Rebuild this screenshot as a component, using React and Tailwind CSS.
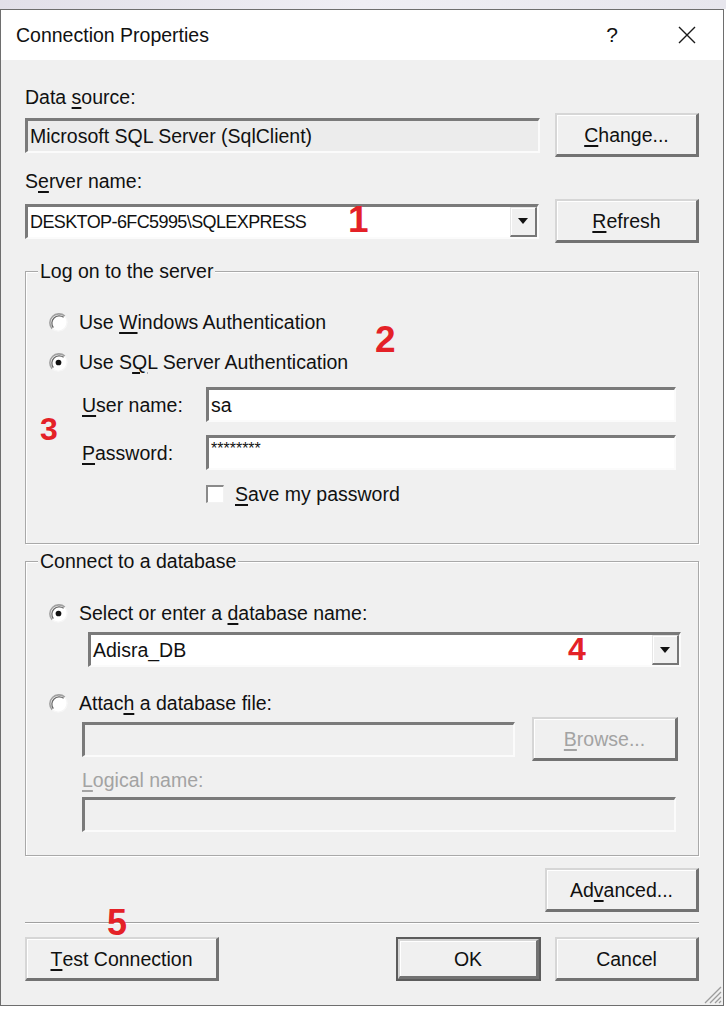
import React from "react";

function U({ children }) {
  return <span className="underline decoration-[1.5px] underline-offset-[3px]">{children}</span>;
}

function Sunken({ className = "", children }) {
  return (
    <div
      className={`border-t-[3px] border-l-[3px] border-b-2 border-r-2 border-t-[#7a7a7a] border-l-[#7a7a7a] border-b-[#fbfbfb] border-r-[#fbfbfb] ${className}`}
    >
      {children}
    </div>
  );
}

function Btn({ className = "", children }) {
  return (
    <div
      className={`flex items-center justify-center bg-[#f0f0f0] border-t-2 border-l-2 border-b-[3px] border-r-[3px] border-t-[#d6d6d6] border-l-[#d6d6d6] border-b-[#727272] border-r-[#727272] shadow-[inset_1px_1px_0_#ffffff] ${className}`}
    >
      {children}
    </div>
  );
}

function Radio({ checked }) {
  return (
    <svg width="19" height="19" viewBox="0 0 18 18" className="shrink-0">
      <circle cx="9" cy="9" r="8.3" fill="#ffffff" />
      <path d="M15 3 A8.5 8.5 0 0 0 3 15" stroke="#a0a0a0" strokeWidth="1.5" fill="none" />
      <path d="M13.9 4.1 A7 7 0 0 0 4.1 13.9" stroke="#6a6a6a" strokeWidth="1.2" fill="none" />
      <path d="M15 3 A8.5 8.5 0 0 1 3 15" stroke="#f6f6f6" strokeWidth="1.2" fill="none" />
      {checked && <circle cx="9" cy="9" r="2.7" fill="#111111" />}
    </svg>
  );
}

function Check() {
  return (
    <div className="w-[18px] h-[18px] bg-white shrink-0 border-t-2 border-l-2 border-t-[#8a8a8a] border-l-[#8a8a8a] border-b border-r border-b-[#f2f2f2] border-r-[#f2f2f2]" />
  );
}

function DropBtn() {
  return (
    <div className="w-[27px] h-full bg-[#f0f0f0] border-t border-l border-t-[#e6e6e6] border-l-[#e6e6e6] border-b-2 border-r-2 border-b-[#777777] border-r-[#777777] shadow-[inset_1px_1px_0_#ffffff] flex items-center justify-center shrink-0">
      <svg width="10" height="6" viewBox="0 0 10 6">
        <path d="M0 0 L10 0 L5 6 Z" fill="#111111" />
      </svg>
    </div>
  );
}

export default function App() {
  return (
    <div className="w-[726px] h-[1024px] bg-white font-['Liberation_Sans',Arial,sans-serif] text-[19.5px] leading-[24px] text-[#111111] overflow-hidden">
      <div className="h-[9px] bg-gradient-to-r from-[#e2e0e9] via-[#efeef4] to-[#e7e6ed]" />
      <div className="relative w-[724px] h-[997px] border border-[#6e6e6e] bg-[#f0f0f0] flex flex-col">
        {/* Title bar */}
        <div className="h-[50px] shrink-0 bg-white flex items-center pl-[15px] pr-[27px]">
          <span className="flex-1">Connection Properties</span>
          <span className="w-[20px] text-center text-[21px]">?</span>
          <svg width="18" height="18" viewBox="0 0 18 18" className="ml-[56px]">
            <path d="M1 1 L17 17 M17 1 L1 17" stroke="#1a1a1a" strokeWidth="1.4" />
          </svg>
        </div>

        {/* Body */}
        <div className="px-[24px] pt-[25px]">
          <div className="h-[24px]">
            Data <U>s</U>ource:
          </div>
          <div className="mt-[4px] h-[44px] flex items-center justify-between">
            <Sunken className="w-[515px] h-[35px] bg-[#ececec] flex items-center pl-[2px]">
              Microsoft SQL Server (SqlClient)
            </Sunken>
            <Btn className="w-[144px] h-[44px]">
              <U>C</U>hange...
            </Btn>
          </div>

          <div className="mt-[12px] h-[24px]">
            S<U>e</U>rver name:
          </div>
          <div className="mt-[6px] h-[44px] flex items-center justify-between">
            <Sunken className="relative w-[514px] h-[35px] bg-white flex items-center">
              <span className="flex-1 pl-[2px] text-[18px] tracking-[-0.6px]">{"DESKTOP-6FC5995\\SQLEXPRESS"}</span>
              <DropBtn />
              <span className="absolute left-[320px] top-[-6px] text-[37px] leading-none font-bold text-[#e42127]">1</span>
            </Sunken>
            <Btn className="w-[144px] h-[44px]">
              <U>R</U>efresh
            </Btn>
          </div>

          {/* Group 1 */}
          <div className="relative mt-[28px] h-[273px] border border-[#a9a9a9] shadow-[inset_1px_1px_0_#ffffff,1px_1px_0_#ffffff] pt-[38px]">
            <span className="absolute left-[12px] top-[-13px] px-[2px] bg-[#f0f0f0]">Log on to the server</span>
            <div className="h-[24px] flex items-center pl-[23px]">
              <Radio />
              <span className="ml-[11px]">
                Use <U>W</U>indows Authentication
              </span>
            </div>
            <div className="mt-[16px] h-[24px] flex items-center pl-[23px]">
              <Radio checked />
              <span className="ml-[11px]">
                Use S<U>Q</U>L Server Authentication
              </span>
            </div>
            <div className="mt-[13px] h-[35px] flex items-center pl-[56px] pr-[22px]">
              <span className="w-[124px] shrink-0">
                <U>U</U>ser name:
              </span>
              <Sunken className="flex-1 h-[35px] bg-white flex items-center pl-[2px]">sa</Sunken>
            </div>
            <div className="mt-[13px] h-[35px] flex items-center pl-[56px] pr-[22px]">
              <span className="w-[124px] shrink-0">
                <U>P</U>assword:
              </span>
              <Sunken className="flex-1 h-[35px] bg-white flex items-start pl-[2px] pt-[1px] text-[16px] leading-[20px]">
                ********
              </Sunken>
            </div>
            <div className="mt-[12px] h-[24px] flex items-center pl-[180px]">
              <Check />
              <span className="ml-[11px]">
                <U>S</U>ave my password
              </span>
            </div>
            <span className="absolute left-[349px] top-[49px] text-[37px] leading-none font-bold text-[#e42127]">2</span>
            <span className="absolute left-[14px] top-[141px] text-[32px] leading-none font-bold text-[#e42127]">3</span>
          </div>

          {/* Group 2 */}
          <div className="relative mt-[17px] h-[295px] border border-[#a9a9a9] shadow-[inset_1px_1px_0_#ffffff,1px_1px_0_#ffffff] pt-[39px]">
            <span className="absolute left-[12px] top-[-13px] px-[2px] bg-[#f0f0f0]">Connect to a database</span>
            <div className="h-[24px] flex items-center pl-[23px]">
              <Radio checked />
              <span className="ml-[11px]">
                Select or enter a <U>d</U>atabase name:
              </span>
            </div>
            <div className="mt-[7px] ml-[62px] mr-[17px]">
              <Sunken className="relative h-[35px] bg-white flex items-center">
                <span className="flex-1 pl-[2px]">Adisra_DB</span>
                <DropBtn />
                <span className="absolute left-[477px] top-[-2px] text-[32px] leading-none font-bold text-[#e42127]">4</span>
              </Sunken>
            </div>
            <div className="mt-[24px] h-[24px] flex items-center pl-[23px]">
              <Radio />
              <span className="ml-[11px]">
                Attac<U>h</U> a database file:
              </span>
            </div>
            <div className="mt-[2px] h-[44px] flex items-center justify-between pl-[56px] pr-[20px]">
              <Sunken className="w-[433px] h-[35px] bg-[#f0f0f0]" />
              <Btn className="w-[146px] h-[44px] text-[#a3a3a3]">
                <U>B</U>rowse...
              </Btn>
            </div>
            <div className="mt-[7px] h-[24px] pl-[56px] text-[#a3a3a3]">
              <U>L</U>ogical name:
            </div>
            <div className="mt-[5px] ml-[56px] mr-[22px]">
              <Sunken className="h-[35px] bg-[#f0f0f0]" />
            </div>
          </div>

          {/* Advanced */}
          <div className="mt-[12px] flex justify-end">
            <Btn className="w-[154px] h-[44px]">
              Ad<U>v</U>anced...
            </Btn>
          </div>

          {/* Separator + bottom buttons */}
          <div className="relative">
            <div className="mt-[10px] h-[2px] border-t border-t-[#a0a0a0] border-b border-b-[#ffffff]" />
            <div className="mt-[13px] h-[44px] flex items-center">
              <Btn className="w-[194px] h-[44px]">
                <U>T</U>est Connection
              </Btn>
              <div className="flex-1" />
              <div className="w-[145px] h-[44px] border-2 border-[#5c5c5c] flex">
                <Btn className="flex-1 h-full">OK</Btn>
              </div>
              <Btn className="ml-[14px] w-[144px] h-[44px]">Cancel</Btn>
            </div>
            <span className="absolute left-[82px] top-[-17px] text-[36px] leading-none font-bold text-[#e42127]">5</span>
          </div>
        </div>

        {/* Resize grip */}
        <svg width="22" height="22" viewBox="0 0 22 22" className="absolute right-[1px] bottom-[1px]">
          <path d="M21 5 L5 21 M21 10 L10 21 M21 15 L15 21 M21 19 L19 21" stroke="#9c9c9c" strokeWidth="1.3" />
        </svg>
      </div>
    </div>
  );
}
